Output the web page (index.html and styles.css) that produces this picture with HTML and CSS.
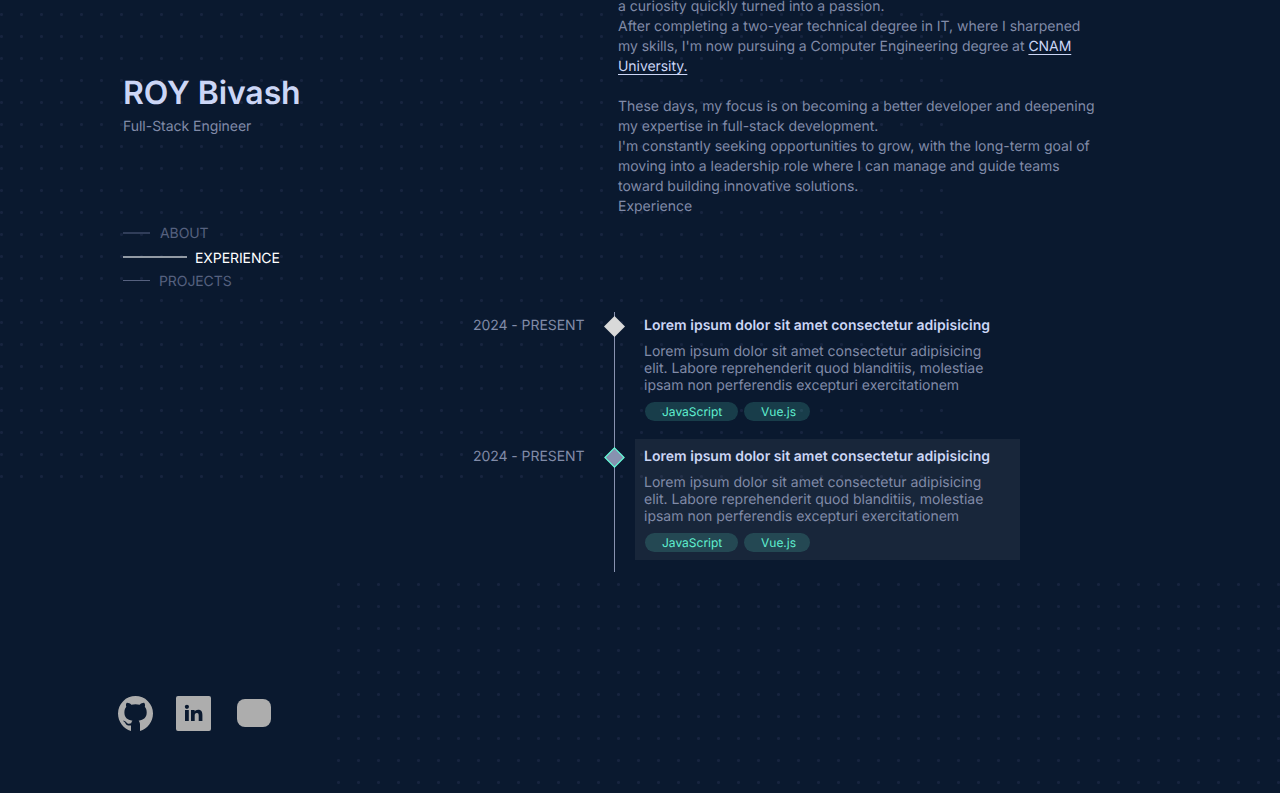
FILE: index.html
```html
<!DOCTYPE html>
<html lang="en">
<head>
<meta charset="utf-8">
<title>ROY Bivash</title>
<link rel="stylesheet" href="styles.css">
</head>
<body>
<div class="page">
  <div class="dots dots-top"></div>
  <div class="dots dots-bottom"></div>
  <aside class="sidebar">
    <header>
      <h1 class="name">ROY Bivash</h1>
      <p class="role">Full-Stack Engineer</p>
    </header>
    <nav class="nav">
      <a class="nav-link about"><span class="dash"></span><span class="nav-label">ABOUT</span></a>
      <a class="nav-link active"><span class="dash"></span><span class="nav-label">EXPERIENCE</span></a>
      <a class="nav-link projects"><span class="dash"></span><span class="nav-label">PROJECTS</span></a>
    </nav>
    <div class="social">
      <svg class="github" viewBox="0 0 35 35"><path d="M17.5 0A17.5 17.5 0 0 0 0 17.5C0 25.8 5.5 32.7 13 35V29.4C8.6 30.3 7.9 27.8 6.7 26.2C6 25.4 5 25.1 4.7 24.8C6.7 24.3 7.8 25.5 8.7 26.7C9.7 28 11.7 27.8 13.2 27.2C13.4 26 13.9 25.2 14.5 24.7C9.2 24 6.4 21.5 6.4 16.5C6.4 14 7 12.2 8.3 10.8C7.7 9 8 7.5 8.7 6.9C10.3 6.7 12 7.6 13.3 8.7C16 8 19 8 21.7 8.7C23 7.6 24.8 6.7 26.3 6.9C27 7.7 27.3 9.2 26.8 10.8C28.1 12.2 28.7 14 28.7 16.5C28.7 21.5 25.8 24 20.6 24.7C21.5 25.6 22 27 22 28.8V35C29.5 32.7 35 25.8 35 17.5A17.5 17.5 0 0 0 17.5 0Z"/></svg>
      <svg class="linkedin" viewBox="0 0 35 35"><path fill-rule="evenodd" d="M2 0H33Q35 0 35 2V33Q35 35 33 35H2Q0 35 0 33V2Q0 0 2 0ZM9 14H12.8V25H9ZM10.9 8.7A2.1 2.1 0 1 0 10.9 12.9A2.1 2.1 0 1 0 10.9 8.7ZM15 14H18.6V15.5C19.3 14.4 20.5 13.7 22.1 13.7C25.5 13.7 26.4 15.9 26.4 19V25H22.7V19.7C22.7 18.2 22.5 16.9 20.9 16.9C19.2 16.9 18.7 18 18.7 19.6V25H15Z"/></svg>
      <span class="social-blank"></span>
    </div>
  </aside>
  <main class="content">
    <section class="intro">
      a curiosity quickly turned into a passion.<br>
      After completing a two-year technical degree in IT, where I sharpened<br>
      <span class="snug">my skills, I'm now pursuing a Computer Engineering degree at</span> <a class="link">CNAM<br>University.</a><br>
      <br>
      These days, my focus is on becoming a better developer and deepening<br>
      my expertise in full-stack development.<br>
      I'm constantly seeking opportunities to grow, with the long-term goal of<br>
      moving into a leadership role where I can manage and guide teams<br>
      toward building innovative solutions.<br>
      Experience
    </section>
    <section class="timeline">
      <article class="entry">
        <div class="date">2024 - PRESENT</div>
        <div class="rail"><svg class="diamond" viewBox="0 0 21 21"><path d="M10.5 0L21 10.5L10.5 21L0 10.5Z"/></svg></div>
        <div class="card">
          <h2 class="title">Lorem ipsum dolor sit amet consectetur adipisicing</h2>
          <p class="desc">Lorem ipsum dolor sit amet consectetur adipisicing<br>elit. Labore reprehenderit quod blanditiis, molestiae<br>ipsam non perferendis excepturi exercitationem</p>
          <div class="tags"><span class="tag">JavaScript</span><span class="tag tag-vue">Vue.js</span></div>
        </div>
      </article>
      <article class="entry">
        <div class="date">2024 - PRESENT</div>
        <div class="rail"><svg class="diamond hovered" viewBox="0 0 21 21"><path d="M10.5 .9L20.1 10.5L10.5 20.1L.9 10.5Z"/></svg></div>
        <div class="card highlighted">
          <h2 class="title">Lorem ipsum dolor sit amet consectetur adipisicing</h2>
          <p class="desc">Lorem ipsum dolor sit amet consectetur adipisicing<br>elit. Labore reprehenderit quod blanditiis, molestiae<br>ipsam non perferendis excepturi exercitationem</p>
          <div class="tags"><span class="tag">JavaScript</span><span class="tag tag-vue">Vue.js</span></div>
        </div>
      </article>
    </section>
  </main>
</div>
</body>
</html>
```
FILE: styles.css
```css
* { box-sizing: border-box; }
body { margin: 0; background: #0a192f; color: #818ba8; font: 400 14px/20px Inter, sans-serif; text-rendering: geometricPrecision; }
h1, h2, p { margin: 0; }
.page { position: relative; display: flex; height: 793px; overflow: hidden; }
.dots {
  position: absolute;
  background-image: radial-gradient(circle at 1.5px 1.5px, #17243f 1.2px, transparent 1.8px);
  background-size: 20px 22px;
}
.dots-top { left: 0; top: 13px; width: 943px; height: 465px; }
.dots-bottom { left: 337px; top: 583px; right: 0; bottom: 0; }
.sidebar { position: relative; display: flex; flex-direction: column; width: 465px; flex: none; padding: 73px 0 62px 123px; }
.name { font-size: 32px; line-height: 40px; font-weight: 600; letter-spacing: -.1px; color: #ccd6f6; white-space: nowrap; }
.role { margin-top: 4px; letter-spacing: -.03px; }
.nav { display: flex; flex-direction: column; margin-top: 87px; letter-spacing: -.09px; }
.nav-link { display: flex; align-items: center; height: 20px; color: #56617f; }
.dash { width: 27px; height: 1px; margin-top: -2px; background: #56617f; }
.about { gap: 10px; }
.about .dash { height: 2px; background: #303d59; }
.active { gap: 8px; margin-top: 5px; color: #fff; }
.active .dash { width: 64px; height: 2px; margin-top: -4px; background: #929aa4; }
.projects { gap: 9px; margin-top: 3px; }
.projects .dash { margin-top: -3px; }
.social { display: flex; align-items: center; margin: auto 0 0 -5px; fill: #adadad; }
.github, .linkedin { width: 35px; height: 35px; }
.linkedin { margin-left: 23px; }
.social-blank { width: 34px; height: 28px; margin: -1px 0 0 26px; border-radius: 8px; background: #adadad; }
.content { position: relative; flex: 1; margin-top: -3px; }
.intro { padding-left: 153px; white-space: nowrap; letter-spacing: -.012px; }
.snug { letter-spacing: -.055px; }
.link { letter-spacing: -.06px; color: #ccd6f6; text-decoration: underline; text-decoration-thickness: 1px; text-underline-offset: 3px; }
.timeline {
  margin-top: 91px; height: 264px;
  background: linear-gradient(#8892b0, #8892b0) 149px 4px / 1px 260px no-repeat;
}
.entry { display: grid; grid-template-columns: 119.5px 50.5px 385px; height: 131px; }
.date { padding-top: 8px; text-align: right; white-space: nowrap; letter-spacing: -.06px; }
.rail { padding: 8px 0 0 19.5px; }
.diamond { display: block; width: 21px; height: 21px; fill: #d9d9d9; }
.hovered { fill: #8892b0; stroke: #64ffda; stroke-width: 1.15; }
.card { height: 121px; padding: 8px 9px 0; white-space: nowrap; }
.highlighted { background: rgba(217, 217, 217, .07); }
.title { font-size: 14px; line-height: 20px; font-weight: 600; letter-spacing: .02px; color: #ccd6f6; }
.desc { margin-top: 7px; line-height: 17px; }
.tags { display: flex; gap: 6px; margin: 8px 0 0 1px; }
.tag { width: 93px; height: 19px; border-radius: 10px; background: rgba(100, 255, 218, .16); color: #5fefcf; font-size: 12px; line-height: 19px; padding-left: 17px; }
.tag-vue { width: 66px; }
```
